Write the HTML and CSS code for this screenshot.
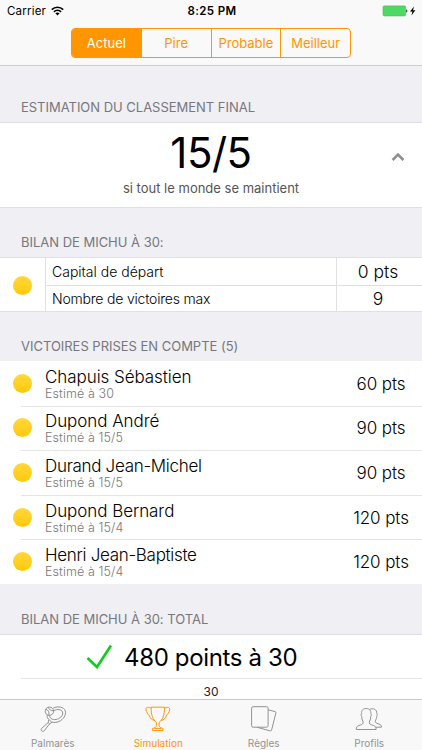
FILE: index.html
```
<!DOCTYPE html>
<html lang="fr">
<head>
  <meta charset="UTF-8">
  <meta name="viewport" content="width=device-width, initial-scale=1.0">
  <title>Simulation</title>
  <link rel="stylesheet" href="styles.css">
</head>
<body>
  <div class="screen">
    <header class="navbar">
      <div class="statusbar">
        <div class="carrier">
          <span>Carrier</span>
          <svg class="wifi" viewBox="0 0 13 10">
            <path d="M.8 3.6C4 .4 9 .4 12.2 3.6M2.9 5.9C5 3.9 8 3.9 10.1 5.9" fill="none" stroke="#000" stroke-width="1.6"/>
            <path d="M4.4 7.3C5.6 6.2 7.4 6.2 8.6 7.3L6.5 9.5z"/>
          </svg>
        </div>
        <div class="time">8:25 PM</div>
        <div class="power">
          <svg class="battery" viewBox="0 0 36 12">
            <rect x="2" y=".9" width="22.6" height="10" rx="1.2" fill="#4cd964" stroke="#62b870" stroke-width=".7"/>
            <path d="M25.2 4.2c1.6.4 1.6 3 0 3.400z" fill="#333"/>
            <path d="M33 1.5l-4 5h2.4l-1 4 4-5.2H32z"/>
          </svg>
        </div>
      </div>
      <nav class="segmented">
        <button class="segment active">Actuel</button>
        <button class="segment">Pire</button>
        <button class="segment">Probable</button>
        <button class="segment">Meilleur</button>
      </nav>
    </header>

    <main class="content">
      <h2 class="section-title first">ESTIMATION DU CLASSEMENT FINAL</h2>
      <section class="estimation">
        <div class="rank">15/5</div>
        <div class="rank-note">si tout le monde se maintient</div>
        <svg class="chevron" viewBox="0 0 14 10"><path d="M1.6 8L7 2.6 12.4 8" fill="none" stroke="#909090" stroke-width="2.7"/></svg>
      </section>

      <h2 class="section-title">BILAN DE MICHU À 30:</h2>
      <section class="summary">
        <div class="summary-dot"><i class="dot"></i></div>
        <div class="summary-label">Capital de départ</div>
        <div class="summary-value">0 pts</div>
        <div class="summary-label last">Nombre de victoires max</div>
        <div class="summary-value last">9</div>
      </section>

      <h2 class="section-title">VICTOIRES PRISES EN COMPTE (5)</h2>
      <ul class="wins">
        <li class="win">
          <i class="dot"></i>
          <div class="player"><div class="name">Chapuis Sébastien</div><div class="estimate">Estimé à 30</div></div>
          <div class="points">60 pts</div>
        </li>
        <li class="win">
          <i class="dot"></i>
          <div class="player"><div class="name">Dupond André</div><div class="estimate">Estimé à 15/5</div></div>
          <div class="points">90 pts</div>
        </li>
        <li class="win">
          <i class="dot"></i>
          <div class="player"><div class="name long">Durand Jean-Michel</div><div class="estimate">Estimé à 15/5</div></div>
          <div class="points">90 pts</div>
        </li>
        <li class="win">
          <i class="dot"></i>
          <div class="player"><div class="name">Dupond Bernard</div><div class="estimate">Estimé à 15/4</div></div>
          <div class="points">120 pts</div>
        </li>
        <li class="win">
          <i class="dot"></i>
          <div class="player"><div class="name long">Henri Jean-Baptiste</div><div class="estimate">Estimé à 15/4</div></div>
          <div class="points">120 pts</div>
        </li>
      </ul>

      <h2 class="section-title total-title">BILAN DE MICHU À 30: TOTAL</h2>
      <section class="total">
        <svg class="check" viewBox="0 0 27 25"><path d="M1.5 14L11 23 25 1.5" fill="none" stroke="#14cc1e" stroke-width="2.7"/></svg>
        <span>480 points à 30</span>
      </section>
      <div class="next-rank">30</div>
    </main>

    <footer class="tabbar">
      <a class="tab">
        <svg class="tab-icon" viewBox="0 0 28 28">
          <circle cx="10.4" cy="6.2" r="4.2"/>
          <path d="M6.700 4.300c2.400.4 3.900 2.700 3.200 5.900M9.300 2.200c.8 2.500 2.600 3.700 5.200 3.600"/>
          <path d="M14.200 3.100c4.800-2.200 10.700-1.300 12 2.600 1.300 4.300-1.700 8.700-6.200 10.800-2.700 1.200-5.300 1-7.300.6l-2.100-2c-2-1.300-2.700-3-2.500-5.200"/>
          <path d="M14.800 5.700c3.500-1.900 7.700-1.400 8.700 1.200 1.100 2.900-1.600 6-5 7.200-3.800 1.300-7.700 0-8.100-3.700"/>
          <path d="M9.800 14.800l-.6 2.700 1.400 1.300 2.600-1.600M9.200 17.500l-6.600 5.900c-1.600 1.600.9 4.200 2.600 2.400l5.400-7"/>
        </svg>
        <span>Palmarès</span>
      </a>
      <a class="tab selected">
        <svg class="tab-icon" viewBox="0 0 28 28">
          <path d="M7.2 2.2h13.2c.5 7.2-1.8 12.7-5.2 15.2v3.2c.4 1.8 1.6 2.5 3.8 2.8v2.2H8.6v-2.2c2.2-.3 3.4-1 3.8-2.8v-3.2C9 14.9 6.7 9.4 7.2 2.2z"/>
          <path d="M7.2 3.4C5 1.6 1.4 2 1.9 4.8c.4 2.7 2.2 4.2 3.4 6.2 1.1 2.2 2.7 4.3 5.2 4.3M20.4 3.4c2.2-1.8 5.8-1.4 5.3 1.4-.4 2.7-2.2 4.2-3.4 6.2-1.1 2.2-2.7 4.3-5.2 4.3"/>
          <path d="M10.5 23.4h6.6"/>
        </svg>
        <span>Simulation</span>
      </a>
      <a class="tab">
        <svg class="tab-icon" viewBox="0 0 28 28">
          <rect x="1.6" y="1.7" width="16.5" height="20.5" rx="1.5"/>
          <path d="M18.1 4.800l7 1.800c.8.2 1 .7.8 1.400l-4.300 17c-.2.8-.8 1-1.500.9L7.200 22.300"/>
        </svg>
        <span>Règles</span>
      </a>
      <a class="tab">
        <svg class="tab-icon" viewBox="0 0 28 28">
          <path d="M1.300 24.500c0-2.400.8-3.300 2.400-3.900l2.800-1c1.800-.6 1.900-2.200 1.300-3.600-.8-1.400-1.200-2.600-1.100-4.500-.8-.8-.8-2.300-.1-2.800-.5-3.300 1.700-5.200 4.600-5.200s5.100 1.900 4.600 5.200c.7.500.7 2-.1 2.800.1 1.900-.3 3.100-1.100 4.500-.6 1.400-.5 3 1.300 3.600l2.800 1c1.600.6 2.400 1.500 2.400 3.900z"/>
          <path d="M14.800 4.300c3.400-1.500 7.500.1 7 4.500.7.500.6 1.800-.1 2.500 0 1.800-.4 2.700-1.100 3.900-.6 1.200-.5 2.400 1 2.900l2.500 1c1.600.6 2.300 1.300 2.400 3.100h-5.600"/>
        </svg>
        <span>Profils</span>
      </a>
    </footer>
  </div>
</body>
</html>
```
FILE: styles.css
```
* { box-sizing: border-box; margin: 0; padding: 0; }
body, html { width: 100%; height: 100%; overflow: hidden; font-family: Inter, "Liberation Sans", sans-serif; }
.screen { height: 750px; display: flex; flex-direction: column; background: #efeff4; color: #000; }

/* barre du haut */
.navbar { height: 66px; flex: none; background: #f9f9f9; border-bottom: 1px solid #cfced5; }
.statusbar {
  height: 28px; padding: 0 5px 6px 7px;
  display: grid; grid-template-columns: 1fr auto 1fr; align-items: center;
  font-size: 11.5px; line-height: 22px;
}
.carrier { display: flex; align-items: center; gap: 5px; letter-spacing: .2px; }
.wifi { width: 13px; height: 10px; }
.time { font-weight: 600; letter-spacing: .4px; }
.power { display: flex; justify-content: flex-end; }
.battery { width: 36px; height: 12px; }
.segmented {
  width: 280px; height: 30px; margin: 0 auto; display: flex; overflow: hidden;
  border: 1px solid #ff9500; border-radius: 4px;
}
.segment {
  flex: 1; border: 0; border-left: 1px solid #ff9500; background: none; color: #ff9500;
  font: 400 13px Inter, sans-serif; white-space: nowrap;
}
.segment:first-child { border-left: 0; }
.segment.active { background: #ff9500; color: #fff; }

/* contenu */
.content { flex: 1; min-height: 0; overflow: hidden; }
.section-title {
  height: 49px; padding: 26px 0 0 21px;
  font-size: 13px; line-height: 16px; font-weight: 400; letter-spacing: -.02px; color: #77777c; white-space: nowrap;
}
.section-title.first { height: 56px; padding-top: 33px; }
.estimation {
  position: relative; height: 86px; padding-top: 4px; text-align: center; background: #fff;
  border-top: 1px solid #dedee3; border-bottom: 1px solid #dedee3;
}
.rank { font-size: 42px; line-height: 52px; letter-spacing: -.5px; }
.rank-note { padding-top: 1px; font-size: 13px; line-height: 16px; color: #555; }
.chevron { position: absolute; right: 17px; top: 29px; width: 14px; height: 10px; }

.dot { width: 19px; height: 19px; border-radius: 50%; background: linear-gradient(#ffd83d, #ffc90a); }
.summary {
  height: 55px; display: grid; grid-template-columns: 45px 1fr 86px; grid-template-rows: 28px 25px;
  background: #fff; border-top: 1px solid #e0e0e3; border-bottom: 1px solid #e0e0e3;
}
.summary-dot { grid-row: 1 / 3; display: flex; align-items: center; padding: 2px 0 0 13px; }
.summary-label, .summary-value { display: flex; align-items: center; border-left: 1px solid #e0e0e3; border-bottom: 1px solid #e0e0e3; font-weight: 300; }
.summary-label { padding-left: 6px; font-size: 14px; }
.summary-value { justify-content: center; font-size: 17.5px; padding-right: 3px; }
.summary-label.last, .summary-value.last { border-bottom: 0; }
.summary-label.last { letter-spacing: -.2px; }

.wins { list-style: none; background: #fff; height: 223px; display: grid; grid-template-rows: repeat(5, 1fr); }
.win { position: relative; display: grid; grid-template-columns: 32px 1fr 82px; align-items: center; padding-left: 13px; }
.win + .win::before { content: ""; position: absolute; left: 21px; right: 0; top: 0; height: 1px; background: #e4e4e7; }
.player { padding-top: 1px; }
.name { font-size: 17px; line-height: 20px; font-weight: 300; letter-spacing: -.06px; }
.name.long { letter-spacing: -.3px; }
.estimate { font-size: 12.5px; line-height: 14px; font-weight: 300; letter-spacing: .1px; color: #777; }
.points { padding-top: 1px; font-size: 17px; font-weight: 300; text-align: center; letter-spacing: -.1px; }

.total-title { height: 50px; padding-top: 27px; }
.total { height: 44px; display: flex; align-items: center; padding: 2px 0 0 86px; gap: 11px; background: #fff; border-top: 1px solid #dedee3; font-size: 24px; letter-spacing: -.35px; white-space: nowrap; }
.check { width: 27px; height: 25px; margin-top: -3px; }
.next-rank { position: relative; height: 30px; background: #fff; text-align: center; font-size: 12px; line-height: 27px; color: #222; }
.next-rank::before { content: ""; position: absolute; left: 21px; right: 0; top: 0; height: 1px; background: #e4e4e7; }

/* onglets */
.tabbar {
  height: 51px; flex: none; display: grid; grid-template-columns: repeat(4, 1fr);
  background: #f8f8f8; border-top: 1px solid #c8c8cc;
}
.tab { display: flex; flex-direction: column; align-items: center; padding-top: 5px; color: #929292; font-size: 10px; line-height: 14px; }
.tab.selected { color: #ff9500; }
.tab-icon { width: 28px; height: 28px; margin-bottom: 3px; fill: none; stroke: currentColor; stroke-width: 1; }
```
